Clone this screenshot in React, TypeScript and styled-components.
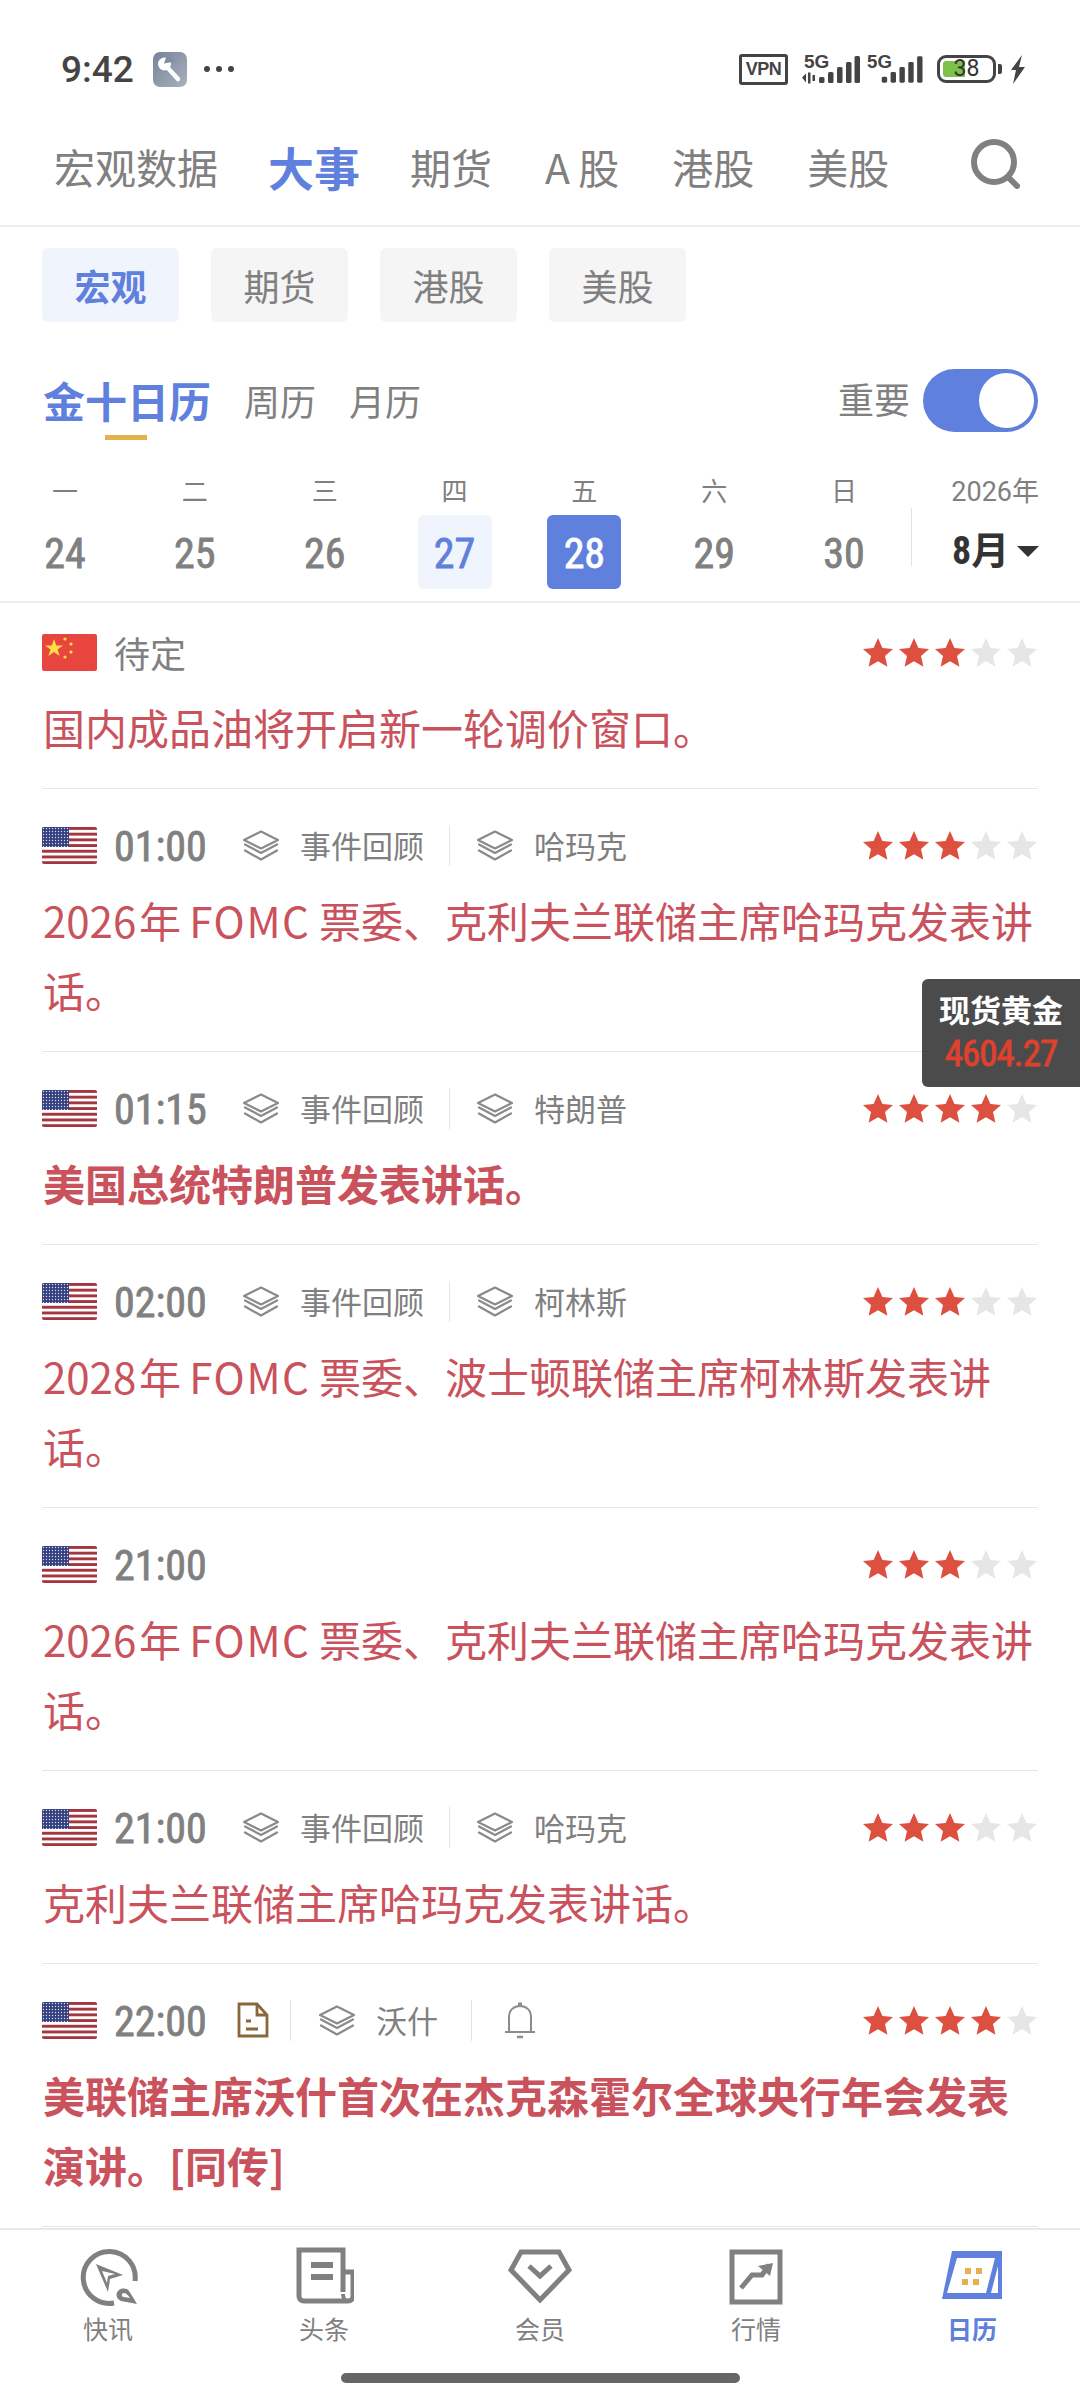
import React from "react";
import styled, { createGlobalStyle } from "styled-components";

const BLUE = "#5f80dc";
const GREY = "#808080";
const RED = "#c9525c";
const CJK = `"Noto Sans CJK SC", "Noto Sans", sans-serif`;
const NARROW = `"Liberation Sans Narrow", "Roboto Condensed", Roboto, sans-serif`;

const Global = createGlobalStyle`
  html, body { margin: 0; padding: 0; background: #fff; }
  body { font-family: ${CJK}; color: ${GREY}; }
  * { box-sizing: border-box; }
`;

const Page = styled.div`
  position: relative;
  width: 1080px;
  height: 2400px;
  overflow: hidden;
  background: #fff;
`;

const StatusBar = styled.div`
  height: 110px;
  padding: 28px 54px 0 61px;
  display: flex;
  align-items: center;
`;
const Clock = styled.span`
  font: 500 37px/1 Roboto, sans-serif;
  color: #444;
  width: 92px;
`;
const Dots = styled.span`
  display: flex;
  gap: 6px;
  margin-left: 17px;
  i { width: 6px; height: 6px; border-radius: 50%; background: #444; display: block; }
`;
const StatusRight = styled.div`
  margin-left: auto;
  display: flex;
  align-items: center;
`;
const Vpn = styled.span`
  width: 49px;
  height: 31px;
  border: 3.5px solid #444;
  border-radius: 3px;
  font: 700 18px/24px "Liberation Sans", sans-serif;
  letter-spacing: -0.5px;
  color: #444;
  text-align: center;
  margin-right: 14px;
`;
const SignalSvg = styled.svg<{ $ml?: number }>`
  display: block;
  overflow: visible;
  margin-left: ${(p) => p.$ml ?? 0}px;
`;
const Battery = styled.span`
  width: 59px;
  height: 28px;
  margin-left: 13px;
  border: 3px solid #444;
  border-radius: 9px;
  background: linear-gradient(to right, #7cc24a 0 22px, transparent 22px);
  background-origin: content-box;
  background-clip: content-box;
  padding: 3px;
  font: 400 23px/16px Roboto, sans-serif;
  color: #333;
  text-align: center;
`;
const BatteryTip = styled.span`
  width: 4px;
  height: 10px;
  border-radius: 0 2px 2px 0;
  background: #444;
  margin-left: 2px;
`;
const BoltSvg = styled.svg`
  margin-left: 8px;
`;

const Header = styled.div`
  height: 117px;
  padding: 0 60px 4px 54px;
  display: flex;
  align-items: center;
  gap: 53px;
  border-bottom: 2px solid #eeeeee;
`;
const HeaderTab = styled.span<{ $active?: boolean }>`
  font-size: ${(p) => (p.$active ? 46 : 41)}px;
  font-weight: ${(p) => (p.$active ? 700 : 400)};
  color: ${(p) => (p.$active ? BLUE : GREY)};
  margin: ${(p) => (p.$active ? "0 -3px" : "0")};
  line-height: 60px;
`;
const SearchWrap = styled.span`
  margin-left: auto;
  display: flex;
  margin-top: -4px;
`;

const Chips = styled.div`
  display: flex;
  gap: 32px;
  padding: 21px 42px 0;
`;
const Chip = styled.span<{ $active?: boolean }>`
  width: 137px;
  height: 74px;
  border-radius: 6px;
  background: ${(p) => (p.$active ? "#f0f4fd" : "#f5f5f5")};
  color: ${(p) => (p.$active ? BLUE : GREY)};
  font-size: 36px;
  font-weight: ${(p) => (p.$active ? 700 : 400)};
  display: flex;
  align-items: center;
  justify-content: center;
`;

const CalendarBar = styled.div`
  height: 150px;
  padding: 10px 42px 0 43px;
  display: flex;
  align-items: center;
`;
const CalTab = styled.span<{ $active?: boolean }>`
  position: relative;
  font-size: ${(p) => (p.$active ? 42 : 36)}px;
  font-weight: ${(p) => (p.$active ? 700 : 400)};
  color: ${(p) => (p.$active ? BLUE : GREY)};
  margin: 0 33px 4px 0;
  line-height: 50px;
  ${(p) =>
    p.$active &&
    `&::after {
      content: "";
      position: absolute;
      left: 62px;
      width: 42px;
      height: 5px;
      top: 60px;
      background: #e6b04a;
    }`}
`;
const ImportantLabel = styled.span`
  margin-left: auto;
  font-size: 36px;
  color: ${GREY};
  margin-right: 13px;
  margin-bottom: 8px;
`;
const Toggle = styled.span`
  width: 115px;
  height: 63px;
  border-radius: 32px;
  background: ${BLUE};
  padding: 4px;
  display: flex;
  justify-content: flex-end;
  margin-top: -4px;
  i { width: 55px; height: 55px; border-radius: 50%; background: #fff; display: block; }
`;

const Week = styled.div`
  display: flex;
  padding: 0 0 12px;
  border-bottom: 2px solid #eeeeee;
`;
const Day = styled.div`
  width: 130px;
  display: flex;
  flex-direction: column;
  align-items: center;
`;
const DayName = styled.div`
  height: 43px;
  font-size: 26px;
  line-height: 36px;
  color: ${GREY};
`;
const DayNum = styled.div<{ $state?: "today" | "selected" }>`
  width: 74px;
  height: 74px;
  border-radius: 6px;
  font: 400 42px/78px ${NARROW};
  -webkit-text-stroke: 0.8px currentColor;
  text-align: center;
  background: ${(p) => (p.$state === "today" ? "#f0f4fd" : p.$state === "selected" ? BLUE : "transparent")};
  color: ${(p) => (p.$state === "today" ? BLUE : p.$state === "selected" ? "#fff" : GREY)};
`;
const MonthCol = styled.div`
  flex: 1;
  display: flex;
  flex-direction: column;
  padding-right: 41px;
  align-items: flex-end;
`;
const Year = styled.div`
  height: 36px;
  font: 400 27px/40px Roboto, ${CJK};
  color: ${GREY};
`;
const MonthBox = styled.div`
  margin-left: 2px;
  align-self: flex-start;
  height: 58px;
  width: 128px;
  flex: none;
  border-left: 1px solid #e2e2e2;
  padding: 28px 0 0 40px;
  display: flex;
  align-items: center;
  white-space: nowrap;
  font-size: 38px;
  font-weight: 700;
  color: #333;
  line-height: 1;
  font-family: ${NARROW}, ${CJK};
`;
const Caret = styled.span`
  flex: none;
  width: 0;
  height: 0;
  border-left: 11px solid transparent;
  border-right: 11px solid transparent;
  border-top: 11px solid #333;
  margin-left: 8px;
`;

const List = styled.div`
  padding: 0 42px;
`;
const Row = styled.div<{ $first?: boolean }>`
  padding: ${(p) => (p.$first ? 30 : 37)}px 0 26px;
  border-bottom: 1px solid #e6e6e6;
`;
const Meta = styled.div`
  height: 38px;
  display: flex;
  align-items: center;
`;
const Flag = styled.svg`
  width: 55px;
  height: 37px;
  border-radius: 2px;
  flex: none;
`;
const Time = styled.span`
  width: 92px;
  margin-left: 17px;
  padding-top: 4px;
  font: 400 42px/44px ${NARROW};
  -webkit-text-stroke: 0.8px currentColor;
  color: ${GREY};
`;
const Pending = styled.span`
  margin-left: 17px;
  font-size: 36px;
  line-height: 38px;
  color: ${GREY};
`;
const Tag = styled.span<{ $ml?: number }>`
  display: flex;
  align-items: center;
  gap: 20px;
  margin-left: ${(p) => p.$ml ?? 36}px;
  font-size: 31px;
  line-height: 38px;
  color: ${GREY};
`;
const Sep = styled.span<{ $ml?: number }>`
  width: 1px;
  height: 41px;
  background: #e4e4e4;
  margin-left: ${(p) => p.$ml ?? 25}px;
`;
const DocWrap = styled.span`
  display: flex;
  margin-left: 31px;
`;
const BellWrap = styled.span`
  display: flex;
  margin-left: 32px;
`;
const Stars = styled.span`
  margin-left: auto;
  display: flex;
  gap: 6px;
  margin-right: 1px;
`;
const Title = styled.div<{ $bold?: boolean }>`
  margin: 21px 0 0 1px;
  font-size: 42px;
  line-height: 70px;
  font-weight: ${(p) => (p.$bold ? 700 : 400)};
  color: ${RED};
`;
const Latin = styled.span`
  letter-spacing: 1.6px;
`;

const TabBar = styled.div`
  margin-top: 1px;
  border-top: 2px solid #e8e8e8;
  padding-top: 16px;
  display: grid;
  grid-template-columns: repeat(5, 216px);
`;
const TabItem = styled.div<{ $active?: boolean }>`
  display: flex;
  flex-direction: column;
  align-items: center;
  font-size: 25px;
  font-weight: ${(p) => (p.$active ? 700 : 400)};
  line-height: 36px;
  color: ${(p) => (p.$active ? BLUE : GREY)};
  gap: 4px;
  svg { display: block; }
`;
const HomeBar = styled.div`
  width: 399px;
  height: 10px;
  border-radius: 5px;
  background: #666;
  margin: 27px auto 0;
`;

const Tip = styled.div`
  position: absolute;
  top: 979px;
  right: 0;
  width: 158px;
  height: 108px;
  border-radius: 6px 0 0 6px;
  background: rgba(60, 60, 60, 0.92);
  display: flex;
  flex-direction: column;
  align-items: center;
`;
const TipName = styled.div`
  font-size: 31px;
  font-weight: 700;
  color: #fff;
  line-height: 40px;
  margin-top: 10px;
`;
const TipPrice = styled.div`
  font: 400 37px/50px ${NARROW};
  -webkit-text-stroke: 0.8px currentColor;
  letter-spacing: -1px;
  color: #e0402e;
`;

const Wrench = () => (
  <svg width="34" height="35" viewBox="0 0 34 35">
    <defs>
      <linearGradient id="wg" x1="0" y1="0" x2="1" y2="1">
        <stop offset="0" stopColor="#76839a" />
        <stop offset="1" stopColor="#a9b1bc" />
      </linearGradient>
    </defs>
    <rect width="34" height="35" rx="7" fill="url(#wg)" />
    <circle cx="11.500" cy="12" r="6.500" fill="#fff" />
    <path d="M13 14l12 13" stroke="#fff" strokeWidth="4.500" strokeLinecap="round" />
    <path d="M11 11.500l3-9 8 7z" fill="#828da0" />
  </svg>
);

const Signal = ({ arrows }: { arrows?: boolean }) => (
  <SignalSvg $ml={arrows ? 0 : 7} width={arrows ? 58 : 57} height="32" viewBox="0 0 58 32">
    <text x={arrows ? 2 : 0} y="15" fontFamily="Liberation Sans, sans-serif" fontWeight="700" fontSize="19" fill="#444">5G</text>
    {arrows && <path d="M0 24.500l4-4v9zM6 19.500h2.500v11H6zM10.500 22h2.500v6h-2.500z" fill="#444" />}
    <rect x={arrows ? 17 : 15} y="24" width="5.500" height="6" rx="1.500" fill="#444" />
    <rect x={arrows ? 26 : 24} y="19" width="5.500" height="11" rx="1.500" fill="#444" />
    <rect x={arrows ? 35 : 33} y="14" width="5.500" height="16" rx="1.500" fill="#444" />
    <rect x={arrows ? 44 : 42} y="9" width="5.500" height="21" rx="1.500" fill="#444" />
    <rect x={arrows ? 52.500 : 51} y="3" width="5.500" height="27" rx="1.500" fill="#444" />
  </SignalSvg>
);

const Bolt = () => (
  <BoltSvg width="16" height="29" viewBox="0 0 16 29">
    <path d="M12 0L1 15h5l-3 14L15 12H9l3-12z" fill="#444" />
  </BoltSvg>
);

const Search = () => (
  <svg width="50" height="50" viewBox="0 0 50 50" fill="none" stroke="#808080" strokeWidth="6" strokeLinecap="round">
    <circle cx="24" cy="23" r="20" />
    <path d="M38 38l9 9" />
  </svg>
);

const US = () => (
  <Flag viewBox="0 0 55 37">
    <rect width="55" height="37" fill="#fff" />
    {[0, 1, 2, 3, 4, 5, 6].map((i) => (
      <rect key={i} y={i * 5.7} width="55" height="2.900" fill="#a5363f" />
    ))}
    <rect width="27" height="20" fill="#343f80" />
    <pattern id="usd" width="3" height="3" patternUnits="userSpaceOnUse">
      <circle cx="1.500" cy="1.500" r="0.700" fill="#d8dbe8" />
    </pattern>
    <rect width="27" height="20" fill="url(#usd)" />
  </Flag>
);

const CN = () => (
  <Flag viewBox="0 0 55 37">
    <rect width="55" height="37" fill="#e8453f" />
    <path d="M12 5l2.200 6.500H21l-5.500 4 2.100 6.500-5.600-4-5.600 4 2.100-6.500-5.500-4h6.800z" fill="#fde047" />
    <circle cx="23" cy="5" r="1.600" fill="#fde047" />
    <circle cx="29" cy="10" r="1.600" fill="#fde047" />
    <circle cx="29" cy="18" r="1.600" fill="#fde047" />
    <circle cx="23" cy="23" r="1.600" fill="#fde047" />
  </Flag>
);

const Star = ({ on }: { on: boolean }) => (
  <svg width="30" height="29" viewBox="0 0 30 29">
    <path d="M15 0l4.400 10 10.600 1-8 7.100 2.400 10.600L15 23.200 5.600 28.700l2.400-10.600-8-7.100 10.600-1z" fill={on ? "#dd4f3f" : "#e6e6e6"} />
  </svg>
);

const Layers = () => (
  <svg width="38" height="31" viewBox="0 0 38 31" fill="none" stroke="#8a8a8a" strokeWidth="2.200" strokeLinejoin="round" strokeLinecap="round">
    <path d="M19 1.500L36 10 19 18.500 2 10z" />
    <path d="M3 14.500l16 8.500 16-8.500" />
    <path d="M3 20.500l16 9 16-9" />
  </svg>
);

const Doc = () => (
  <svg width="32" height="36" viewBox="0 0 32 36" fill="none" stroke="#8a673a" strokeWidth="2.800">
    <path d="M2 2h18l10 11v21H2z" />
    <path d="M20 2v11h10" />
    <path d="M9 19h5M9 27h12" />
  </svg>
);

const Bell = () => (
  <svg width="32" height="37" viewBox="0 0 32 37" fill="none" stroke="#8c8c8c" strokeWidth="2">
    <path d="M1 30h30M5 30V15C5 8 10 4 16 4s11 4 11 11v15" />
    <path d="M13 35h6" strokeWidth="2.500" />
    <path d="M14 2h4" strokeWidth="3" />
  </svg>
);

const iconGrey = "#808080";
const FlashIcon = () => (
  <svg width="60" height="60" viewBox="0 0 60 60" fill="none">
    <path d="M36 57A26 26 0 1 1 57 35" stroke={iconGrey} strokeWidth="5" />
    <path fillRule="evenodd" d="M18 18l27 11-13 4-2 13zM24 25l5 12 1-7 7-2z" fill={iconGrey} />
    <path fillRule="evenodd" d="M59 58l-16-3c-5-2-6-8-2-11 3-2 8-2 10 1 2 3 6 9 8 13zM52 52c-2-3-4-5-6-5-3 0-3 4 0 4z" fill={iconGrey} />
  </svg>
);
const NewsIcon = () => (
  <svg width="60" height="60" viewBox="0 0 60 60" fill="none">
    <path d="M49 46V4H5v46c0 3 2 5 5 5h44c3 0 5-2 5-5V26h-8" stroke={iconGrey} strokeWidth="5" />
    <path d="M49 48c0 4 2 7 5 7" stroke={iconGrey} strokeWidth="4" />
    <path d="M17 16h22v6H17zM17 28h22v6H17z" fill={iconGrey} />
  </svg>
);
const VipIcon = () => (
  <svg width="64" height="60" viewBox="0 0 64 60" fill="none">
    <path d="M13 6h38l10 18-29 30L3 24z" stroke={iconGrey} strokeWidth="5" strokeLinejoin="miter" />
    <path d="M21 20l11 10 11-10" stroke={iconGrey} strokeWidth="5" />
  </svg>
);
const MarketIcon = () => (
  <svg width="56" height="60" viewBox="0 0 56 60" fill="none">
    <rect x="4" y="6" width="48" height="50" stroke={iconGrey} strokeWidth="5" />
    <path d="M13 42l11-13h10l7-10" stroke={iconGrey} strokeWidth="5" />
    <path d="M30 20l15-3-3 13z" fill={iconGrey} />
  </svg>
);
const CalIcon = () => (
  <svg width="62" height="60" viewBox="0 0 62 60" fill="none">
    <path d="M11 5h50v48H1z" fill={BLUE} />
    <path d="M16 12h38l-9 35H6z" fill="#fff" />
    <path d="M57 20v27h-7z" fill="#fff" />
    <path d="M24 22h6v6h-6zM35 22h6v6h-6zM21 33h6v6h-6zM32 33h6v6h-6z" fill="#e8b04a" />
  </svg>
);

const days = [
  ["一", "24"],
  ["二", "25"],
  ["三", "26"],
  ["四", "27", "today"],
  ["五", "28", "selected"],
  ["六", "29"],
  ["日", "30"],
] as const;

type Ev = {
  flag: "us" | "cn";
  time?: string;
  tags?: string[];
  stars: number;
  text: React.ReactNode;
  bold?: boolean;
  doc?: boolean;
};

const fomc = (year: string, rest: string) => (
  <>
    {year}{"\u200a"}年{"\u2009"}<Latin>FOMC</Latin>{"\u2009"}{rest}
  </>
);

const events: Ev[] = [
  { flag: "cn", stars: 3, text: "国内成品油将开启新一轮调价窗口。" },
  { flag: "us", time: "01:00", tags: ["事件回顾", "哈玛克"], stars: 3, text: fomc("2026", "票委、克利夫兰联储主席哈玛克发表讲话。") },
  { flag: "us", time: "01:15", tags: ["事件回顾", "特朗普"], stars: 4, bold: true, text: "美国总统特朗普发表讲话。" },
  { flag: "us", time: "02:00", tags: ["事件回顾", "柯林斯"], stars: 3, text: fomc("2028", "票委、波士顿联储主席柯林斯发表讲话。") },
  { flag: "us", time: "21:00", stars: 3, text: fomc("2026", "票委、克利夫兰联储主席哈玛克发表讲话。") },
  { flag: "us", time: "21:00", tags: ["事件回顾", "哈玛克"], stars: 3, text: "克利夫兰联储主席哈玛克发表讲话。" },
  { flag: "us", time: "22:00", doc: true, tags: ["沃什"], stars: 4, bold: true, text: "美联储主席沃什首次在杰克森霍尔全球央行年会发表演讲。[同传]" },
];

export default function App() {
  return (
    <Page>
      <Global />
      <StatusBar>
        <Clock>9:42</Clock>
        <Wrench />
        <Dots><i /><i /><i /></Dots>
        <StatusRight>
          <Vpn>VPN</Vpn>
          <Signal arrows />
          <Signal />
          <Battery>38</Battery>
          <BatteryTip />
          <Bolt />
        </StatusRight>
      </StatusBar>

      <Header>
        <HeaderTab>宏观数据</HeaderTab>
        <HeaderTab $active>大事</HeaderTab>
        <HeaderTab>期货</HeaderTab>
        <HeaderTab>A&#8201;股</HeaderTab>
        <HeaderTab>港股</HeaderTab>
        <HeaderTab>美股</HeaderTab>
        <SearchWrap><Search /></SearchWrap>
      </Header>

      <Chips>
        <Chip $active>宏观</Chip>
        <Chip>期货</Chip>
        <Chip>港股</Chip>
        <Chip>美股</Chip>
      </Chips>

      <CalendarBar>
        <CalTab $active>金十日历</CalTab>
        <CalTab>周历</CalTab>
        <CalTab>月历</CalTab>
        <ImportantLabel>重要</ImportantLabel>
        <Toggle><i /></Toggle>
      </CalendarBar>

      <Week>
        {days.map(([n, d, s]) => (
          <Day key={d}>
            <DayName>{n}</DayName>
            <DayNum $state={s}>{d}</DayNum>
          </Day>
        ))}
        <MonthCol>
          <Year>2026年</Year>
          <MonthBox>8月<Caret /></MonthBox>
        </MonthCol>
      </Week>

      <List>
        {events.map((e, i) => (
          <Row key={i} $first={i === 0}>
            <Meta>
              {e.flag === "cn" ? <CN /> : <US />}
              {e.time ? <Time>{e.time}</Time> : <Pending>待定</Pending>}
              {e.doc && (
                <>
                  <DocWrap><Doc /></DocWrap>
                  <Sep $ml={21} />
                </>
              )}
              {e.tags?.map((t, j) => (
                <React.Fragment key={t}>
                  {j > 0 && <Sep />}
                  <Tag $ml={e.doc ? 27 : j > 0 ? 26 : 36}>
                    <Layers />
                    {t}
                  </Tag>
                </React.Fragment>
              ))}
              {e.doc && (
                <>
                  <Sep $ml={33} />
                  <BellWrap><Bell /></BellWrap>
                </>
              )}
              <Stars>
                {[0, 1, 2, 3, 4].map((s) => (
                  <Star key={s} on={s < e.stars} />
                ))}
              </Stars>
            </Meta>
            <Title $bold={e.bold}>{e.text}</Title>
          </Row>
        ))}
      </List>

      <TabBar>
        <TabItem><FlashIcon />快讯</TabItem>
        <TabItem><NewsIcon />头条</TabItem>
        <TabItem><VipIcon />会员</TabItem>
        <TabItem><MarketIcon />行情</TabItem>
        <TabItem $active><CalIcon />日历</TabItem>
      </TabBar>
      <HomeBar />

      <Tip>
        <TipName>现货黄金</TipName>
        <TipPrice>4604.27</TipPrice>
      </Tip>
    </Page>
  );
}
